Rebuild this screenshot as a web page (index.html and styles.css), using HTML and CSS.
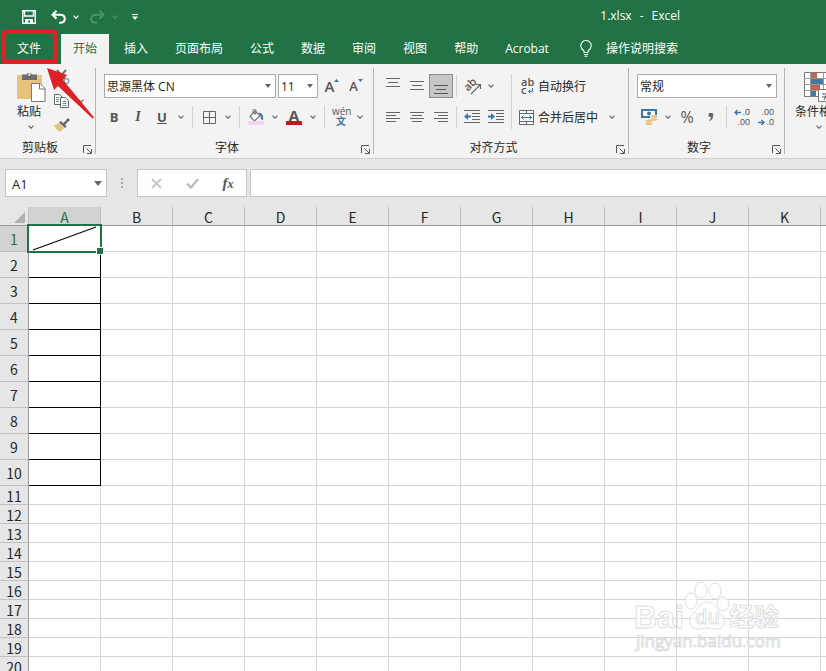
FILE: index.html
```
<!DOCTYPE html>
<html lang="zh-CN">

<head>
    <meta charset="UTF-8">
    <meta name="viewport" content="width=device-width, initial-scale=1.0">
    <title>1.xlsx - Excel</title>
    <link rel="stylesheet" href="styles.css">
</head>

<body>
    <!-- Shared shapes -->
    <svg class="defs" aria-hidden="true">
        <symbol id="chevron" viewBox="0 0 6 4"><path d="M.5 .7 3 3.2 5.5 .7" fill="none" stroke="currentColor" stroke-width="1.2"/></symbol>
        <symbol id="launcher" viewBox="0 0 9 9"><path d="M.5 8V.5H8M3.5 3.5 8 8M8.5 4v4.5H4" fill="none" stroke="#555"/></symbol>
    </svg>

    <header class="titlebar">
        <div class="quick">
            <button class="btn" aria-label="保存"><svg width="14" height="14" viewBox="0 0 14 14"><path d="M.7 .7h12.6v12.6H.7zM2.500 1v5h9V1" fill="none" stroke="#fff" stroke-width="1.400"/><path d="M3 9h8v4H8v-2.500H6V13H3z" fill="#fff"/></svg></button>
            <button class="btn undo" aria-label="撤消"><svg width="15" height="14" viewBox="0 0 15 14"><path d="M5.500 .8 1.500 4.800l4 4M2 4.800h7c3 0 4.800 1.600 4.800 4S12 12.800 9 12.800H8" fill="none" stroke="#fff" stroke-width="2"/></svg></button>
            <button class="chev" aria-label="撤消列表"><svg width="6" height="4"><use href="#chevron"/></svg></button>
            <button class="btn redo" aria-label="恢复"><svg width="15" height="14" viewBox="0 0 15 14"><path d="M9.500 .8l4 4-4 4M13 4.800H6C3 4.800 1.200 6.400 1.200 8.800S3 12.800 6 12.800H7" fill="none" stroke="#4f9169" stroke-width="2"/></svg></button>
            <button class="chev redo" aria-label="恢复列表"><svg width="6" height="4"><use href="#chevron"/></svg></button>
            <button class="btn customize" aria-label="自定义快速访问工具栏"><svg width="6" height="6" viewBox="0 0 6 6"><path d="M0 .5h6" stroke="#fff"/><path d="M0 2.500h6L3 6z" fill="#fff"/></svg></button>
        </div>
        <div class="doc-title"><span>1.xlsx</span><span>-</span><span>Excel</span></div>
    </header>

    <nav class="tabs">
        <button class="tab file">文件</button>
        <button class="tab active">开始</button>
        <button class="tab">插入</button>
        <button class="tab">页面布局</button>
        <button class="tab">公式</button>
        <button class="tab">数据</button>
        <button class="tab">审阅</button>
        <button class="tab">视图</button>
        <button class="tab">帮助</button>
        <button class="tab">Acrobat</button>
        <button class="tab search">
            <svg width="12" height="17" viewBox="0 0 12 17"><path d="M4 12.500V11C2 9.500 .7 8 .7 5.800a5.300 5.300 0 0 1 10.600 0C11.300 8 10 9.500 8 11v1.500zM4 14.500h4M4.500 16.300h3" fill="none" stroke="#fff" stroke-width="1.100"/></svg>
            操作说明搜索
        </button>
    </nav>

    <div class="ribbon">
        <!-- Clipboard -->
        <section class="group clipboard">
            <div class="tools">
                <button class="big">
                    <svg width="30" height="32" viewBox="0 0 30 32"><path d="M0 4h25v24H0z" fill="#e8c27c"/><path d="M5 3.500h4.500a3 3 0 0 1 5.500 0h5V9H5z" fill="#6d6d6d"/><circle cx="12.300" cy="3.500" r="1.200" fill="#f2f2f2"/><path d="M14.500 12.500h8.500l5 5v13H14.500z" fill="#fff" stroke="#777"/><path d="M22.500 12.500V18H28" fill="none" stroke="#777"/></svg>
                    粘贴
                    <svg width="6" height="4"><use href="#chevron"/></svg>
                </button>
                <div class="small-tools">
                    <button class="btn" aria-label="剪切"><svg width="16" height="16" viewBox="0 0 16 16"><path d="M12 1 4 10M3 1l8 9" stroke="#777" stroke-width="2"/><circle cx="12.500" cy="12" r="2.300" fill="none" stroke="#7f9cbc" stroke-width="1.300"/><circle cx="3.500" cy="12" r="2.300" fill="none" stroke="#7f9cbc" stroke-width="1.300"/></svg></button>
                    <div class="row">
                        <button class="btn" aria-label="复制"><svg width="16" height="14" viewBox="0 0 16 14"><path d="M.5 .5h5L8 3v7.500H.5z" fill="#fff" stroke="#666"/><path d="M6.500 3.500h5l3 3v7h-8z" fill="#fff" stroke="#666"/><path d="M2 3.500h3M2 5.500h3M2 7.500h3" stroke="#5b88b5"/><path d="M8.500 7.500h4M8.500 9.500h4M8.500 11.500h4" stroke="#5b88b5"/></svg></button>
                        <button class="chev" aria-label="复制选项"><svg width="6" height="4"><use href="#chevron"/></svg></button>
                    </div>
                    <button class="btn" aria-label="格式刷"><svg width="16" height="14" viewBox="0 0 16 14"><path d="M0 7.500 5 5l5 5-3.500 4C4 13 1.500 11 0 7.500z" fill="#e8c27c"/><path d="M5 4.500 7 3l5.500 5.500L11 10z" fill="#666"/><path d="m9 5 2-1.500L14 0l2 2-3.500 3-1.500 2.500z" fill="#666"/></svg></button>
                </div>
            </div>
            <div class="foot"><span>剪贴板</span><button aria-label="剪贴板设置"><svg width="9" height="9"><use href="#launcher"/></svg></button></div>
        </section>

        <!-- Font -->
        <section class="group font">
            <div class="tools">
                <div class="row boxes">
                    <div class="combo font-name"><select aria-label="字体"><option>思源黑体 CN</option></select></div>
                    <div class="combo font-size"><select aria-label="字号"><option>11</option></select></div>
                    <button class="btn glyph grow" aria-label="增大字号">A<svg width="5" height="3"><path d="M0 3h5L2.500 0z" fill="#3f74a6"/></svg></button>
                    <button class="btn glyph shrink" aria-label="减小字号">A<svg width="5" height="3"><path d="M0 0h5L2.500 3z" fill="#3f74a6"/></svg></button>
                </div>
                <div class="row">
                    <button class="btn glyph"><b>B</b></button>
                    <button class="btn glyph"><i>I</i></button>
                    <button class="btn glyph"><u>U</u></button>
                    <button class="chev" aria-label="下划线选项"><svg width="6" height="4"><use href="#chevron"/></svg></button>
                    <span class="sep"></span>
                    <button class="btn" aria-label="边框"><svg width="13" height="13" viewBox="0 0 13 13"><path d="M.5 .5h12v12H.5zM6.500 .5v12M.5 6.500h12" fill="none" stroke="#666"/></svg></button>
                    <button class="chev" aria-label="边框选项"><svg width="6" height="4"><use href="#chevron"/></svg></button>
                    <span class="sep"></span>
                    <button class="btn" aria-label="填充颜色"><svg width="16" height="16" viewBox="0 0 16 16"><path d="M7 2 2 7.500 6.500 12 12 6.500 7 2v4" fill="#fff" stroke="#777" stroke-width="1.200"/><path d="M5 4V1.500a1.500 1.500 0 0 1 3 0V5" fill="none" stroke="#777"/><path d="M10.500 3.500c4 .5 5 3 4.500 8-1.500-1-2.500-2.500-2.500-4.500z" fill="#3f74a6"/><path d="M0 12h16v4H0z" fill="#fbd0f7"/></svg></button>
                    <button class="chev" aria-label="填充选项"><svg width="6" height="4"><use href="#chevron"/></svg></button>
                    <button class="btn glyph color" aria-label="字体颜色"><b>A</b></button>
                    <button class="chev" aria-label="字体颜色选项"><svg width="6" height="4"><use href="#chevron"/></svg></button>
                    <span class="sep"></span>
                    <button class="btn pinyin" aria-label="拼音指南">
                        <svg width="18" height="18" viewBox="0 0 18 18"><text x="0" y="7">wén</text><text class="wen" x="4" y="17">文</text></svg>
                    </button>
                    <button class="chev" aria-label="拼音选项"><svg width="6" height="4"><use href="#chevron"/></svg></button>
                </div>
            </div>
            <div class="foot"><span>字体</span><button aria-label="字体设置"><svg width="9" height="9"><use href="#launcher"/></svg></button></div>
        </section>

        <!-- Alignment -->
        <section class="group align">
            <div class="tools">
                <div class="stack">
                    <div class="row">
                        <button class="btn" aria-label="顶端对齐"><svg width="14" height="16" viewBox="0 0 14 16"><path d="M0 .5h14M2 4.500h10M0 8.500h14" stroke="#666"/></svg></button>
                        <button class="btn" aria-label="垂直居中"><svg width="14" height="16" viewBox="0 0 14 16"><path d="M0 3.500h14M2 7.500h10M0 11.500h14" stroke="#666"/></svg></button>
                        <button class="btn pressed" aria-label="底端对齐"><svg width="14" height="16" viewBox="0 0 14 16"><path d="M0 7.500h14M2 11.500h10M0 15.500h14" stroke="#555"/></svg></button>
                        <span class="sep"></span>
                        <button class="btn" aria-label="方向"><svg width="20" height="20" viewBox="0 0 20 20"><text class="ab" x="4" y="15" transform="rotate(-45 6 13)">ab</text><path d="M9 18 18 9M14 8.500h4.500V13" fill="none" stroke="#666" stroke-width="1.200"/></svg></button>
                        <button class="chev" aria-label="方向选项"><svg width="6" height="4"><use href="#chevron"/></svg></button>
                    </div>
                    <div class="row">
                        <button class="btn" aria-label="左对齐"><svg width="14" height="12" viewBox="0 0 14 12"><path d="M0 1.500h14M0 4.500h10M0 7.500h14M0 10.500h10" stroke="#666"/></svg></button>
                        <button class="btn" aria-label="居中"><svg width="14" height="12" viewBox="0 0 14 12"><path d="M0 1.500h14M2 4.500h10M0 7.500h14M2 10.500h10" stroke="#666"/></svg></button>
                        <button class="btn" aria-label="右对齐"><svg width="14" height="12" viewBox="0 0 14 12"><path d="M0 1.500h14M4 4.500h10M0 7.500h14M4 10.500h10" stroke="#666"/></svg></button>
                        <span class="sep"></span>
                        <button class="btn" aria-label="减少缩进"><svg width="16" height="14" viewBox="0 0 16 14"><path d="M0 .5h16M8 3.500h8M8 6.500h8M8 9.500h8M0 12.500h16" stroke="#666"/><path d="M0 6.500 4 3v2.500h3v2H4V10z" fill="#3f74a6"/></svg></button>
                        <button class="btn" aria-label="增加缩进"><svg width="16" height="14" viewBox="0 0 16 14"><path d="M0 .5h16M8 3.500h8M8 6.500h8M8 9.500h8M0 12.500h16" stroke="#666"/><path d="M7 6.500 3 3v2.500H0v2h3V10z" fill="#3f74a6"/></svg></button>
                    </div>
                </div>
                <span class="sep tall"></span>
                <div class="stack">
                    <button class="wide"><svg width="16" height="20" viewBox="0 0 16 20"><text class="ab" x="2" y="9">ab</text><text class="ab" x="2" y="17">c</text><path d="M13.500 11v3.500H9.500M11.500 12.500l-2 2 2 2" fill="none" stroke="#3f74a6"/></svg>自动换行</button>
                    <div class="row">
                        <button class="wide"><svg width="16" height="15" viewBox="0 0 16 15"><path d="M.5 .5h14v14H.5zM.5 3.500h14M.5 11.500h14M7.500 .5v3M7.500 11.500v3" fill="#fff" stroke="#666"/><path d="M2.500 7.500h10M4.500 5.500l-2 2 2 2M10.500 5.500l2 2-2 2" fill="none" stroke="#3f74a6"/></svg>合并后居中</button>
                        <button class="chev" aria-label="合并选项"><svg width="6" height="4"><use href="#chevron"/></svg></button>
                    </div>
                </div>
            </div>
            <div class="foot"><span>对齐方式</span><button aria-label="对齐设置"><svg width="9" height="9"><use href="#launcher"/></svg></button></div>
        </section>

        <!-- Number -->
        <section class="group number">
            <div class="tools">
                <div class="combo"><select aria-label="数字格式"><option>常规</option></select></div>
                <div class="row">
                    <button class="btn" aria-label="会计数字格式"><svg width="17" height="16" viewBox="0 0 17 16"><path d="M1 1h14v7H1z" fill="#fff" stroke="#3f74a6" stroke-width="2"/><circle cx="8" cy="4.500" r="2" fill="#3f74a6"/><path d="M9 6h8v5H9zM4 11h8v5H4z" fill="#f2f2f2"/><ellipse cx="13" cy="7.500" rx="3.500" ry="1.300" fill="#e8c27c"/><ellipse cx="13" cy="10.500" rx="3.500" ry="1.300" fill="#e8c27c"/><ellipse cx="8" cy="12" rx="3.500" ry="1.300" fill="#e8c27c"/><ellipse cx="8" cy="14.700" rx="3.500" ry="1.300" fill="#e8c27c"/></svg></button>
                    <button class="chev" aria-label="货币选项"><svg width="6" height="4"><use href="#chevron"/></svg></button>
                    <button class="btn glyph percent">%</button>
                    <button class="btn" aria-label="千位分隔样式"><svg width="6" height="8" viewBox="0 0 6 8"><path d="M.5 2a2.300 2.300 0 0 1 4.700 0c.2 3-1.200 5-3.200 6L1.300 7C2.600 6.300 3.200 5.300 3 4.200 1.500 4.400 .5 3.500 .5 2z" fill="#666"/></svg></button>
                    <span class="sep"></span>
                    <button class="btn decimals"><span><svg width="7" height="7" viewBox="0 0 7 7"><path d="M7 3.500H1M3.500 1 1 3.500 3.500 6" fill="none" stroke="#3f74a6" stroke-width="1.300"/></svg>.0</span><span>.00</span></button>
                    <button class="btn decimals"><span>.00</span><span><svg width="7" height="7" viewBox="0 0 7 7"><path d="M0 3.500h6M3.500 1 6 3.500 3.500 6" fill="none" stroke="#3f74a6" stroke-width="1.300"/></svg>.0</span></button>
                </div>
            </div>
            <div class="foot"><span>数字</span><button aria-label="数字设置"><svg width="9" height="9"><use href="#launcher"/></svg></button></div>
        </section>

        <!-- Styles -->
        <section class="group styles">
            <div class="tools">
                <button class="big">
                    <svg width="32" height="32" viewBox="0 0 32 32"><path d="M1.500 1.500h28v24h-28z" fill="#fff" stroke="#777"/><path d="M8 2h6v5H8zM8 14h9v5H8z" fill="#c8644b"/><path d="M8 8h12v5H8zM8 20h5v5H8z" fill="#4179ac"/><path d="M1 7.500h28M1 13.500h28M1 19.500h28M7.500 1v25M20.500 1v25" stroke="#999"/><path d="M15.500 18.500h15v12h-15z" fill="#fff" stroke="#777"/><path d="M19 23h8M19 26h8M25 20l-4 9" stroke="#555"/></svg>
                    条件格式
                    <svg width="6" height="4"><use href="#chevron"/></svg>
                </button>
            </div>
        </section>

        <svg class="arrow" width="48" height="52" viewBox="0 0 48 52" aria-hidden="true"><path d="M0 0 20 7 16 12 47 49.500 45.500 50.500 11 18 7 22z" fill="#dc2127"/></svg>
    </div>

    <div class="formula-bar">
        <div class="combo name-box"><input type="text" value="A1" aria-label="名称框"></div>
        <svg class="dots" width="2" height="10" viewBox="0 0 2 10"><path d="M0 0h2v2H0zM0 4h2v2H0zM0 8h2v2H0z" fill="#aaa"/></svg>
        <div class="formula-buttons">
            <button aria-label="取消"><svg width="11" height="11" viewBox="0 0 11 11"><path d="m1 1 9 9M10 1l-9 9" stroke="#bbb" stroke-width="1.700"/></svg></button>
            <button aria-label="输入"><svg width="13" height="11" viewBox="0 0 13 11"><path d="m1 5.500 4 4L12 1" fill="none" stroke="#bbb" stroke-width="2.200"/></svg></button>
            <button class="fx" aria-label="插入函数">f<small>x</small></button>
        </div>
        <input class="formula" type="text" aria-label="编辑栏">
    </div>

    <main class="sheet">
        <table>
            <thead>
                <tr>
                    <th class="corner"><svg width="11" height="11"><path d="M11 0v11H0z" fill="#b2b2b2"/></svg></th>
                    <th class="on">A</th><th>B</th><th>C</th><th>D</th><th>E</th><th>F</th><th>G</th><th>H</th><th>I</th><th>J</th><th>K</th><th></th>
                </tr>
            </thead>
            <tbody id="rows"></tbody>
        </table>
        <div class="selection"><svg viewBox="0 0 71 24" preserveAspectRatio="none"><path d="M4 23 67 1" stroke="#000"/></svg></div>
        <svg class="watermark" width="150" height="76" viewBox="0 0 150 76" aria-hidden="true">
            <text class="logo" x="0" y="47">Bai</text>
            <ellipse cx="57" cy="20" rx="6" ry="8"/>
            <ellipse cx="67" cy="9" rx="6" ry="8"/>
            <ellipse cx="81" cy="10" rx="6" ry="8"/>
            <ellipse cx="89" cy="23" rx="6" ry="7"/>
            <path d="M73 21c8 0 9 8 14 12s5 15-4 15c-5 0-6-1-10-1s-5 1-10 1c-9 0-9-11-4-15s6-12 14-12z"/>
            <text class="du" x="61" y="43">du</text>
            <text class="cjk" x="95" y="45">经验</text>
            <text class="url" x="2" y="66">jingyan.baidu.com</text>
        </svg>
    </main>

    <script>
        const body = document.getElementById("rows");
        for (let r = 1; r <= 20; r++) {
            const tr = body.insertRow();
            // the first ten rows are taller and have a bordered A cell
            if (r <= 10) tr.className = "tall";
            const th = document.createElement("th");
            th.textContent = r;
            if (r === 1) th.className = "on";
            tr.appendChild(th);
            for (let c = 0; c < 12; c++) {
                const td = tr.insertCell();
                if (c === 0 && r <= 10) td.className = "boxed";
            }
        }
    </script>
</body>

</html>
```
FILE: styles.css
```
* {
    box-sizing: border-box;
}

body {
    margin: 0;
    height: 100vh;
    overflow: hidden;
    display: flex;
    flex-direction: column;
    font-family: "Open Sans", "Noto Sans CJK SC", sans-serif;
    font-size: 12px;
    line-height: 16px;
    color: #262626;
    background: #e6e6e6;
}

button,
input,
select {
    font: inherit;
    color: inherit;
    margin: 0;
    padding: 0;
    border: none;
    background: none;
    border-radius: 0;
}

svg {
    display: block;
    flex: none;
}

.defs {
    position: absolute;
    width: 0;
    height: 0;
}

/* Title bar and tabs */
.titlebar {
    flex: none;
    height: 34px;
    background: #217346;
    color: #fff;
    display: flex;
    justify-content: space-between;
    padding: 0 146px 0 17px;
}

.quick {
    display: flex;
    align-items: center;
}

.quick .undo {
    margin-left: 5px;
}

.quick .chev {
    width: 12px;
    color: #fff;
}

.quick .redo {
    margin-left: 3px;
}

.quick .chev.redo {
    margin: 0;
    color: #4f9169;
}

.quick .customize {
    margin-left: 2px;
}

.doc-title {
    display: flex;
    gap: 8px;
    align-items: center;
    padding-bottom: 3px;
}

.tabs {
    flex: none;
    height: 30px;
    background: #217346;
    display: flex;
    gap: 3px;
    padding-left: 5px;
}

.tab {
    padding: 0 12px 1px;
    color: #fff;
    white-space: nowrap;
}

.tab.file {
    position: relative;
    margin-right: 5px;
}

.tab.file::after {
    content: "";
    position: absolute;
    top: -4px;
    right: -4px;
    bottom: 0;
    left: -3px;
    border: 4px solid #dc2127;
    border-radius: 2px;
}

.tab.active {
    background: #f3f3f3;
    color: #217346;
}

.tab.search {
    display: flex;
    align-items: center;
    gap: 14px;
    margin-left: 4px;
}

/* Ribbon */
.ribbon {
    flex: none;
    position: relative;
    display: flex;
    overflow: hidden;
    background: #f3f3f3;
    border-bottom: 1px solid #cfcfcf;
}

.group {
    flex: none;
    position: relative;
    display: flex;
    flex-direction: column;
    gap: 7px;
    padding-top: 10px;
}

.group::after {
    content: "";
    position: absolute;
    top: 4px;
    right: 0;
    bottom: 4px;
    border-right: 1px solid #b4b4b4;
}

.group .tools {
    height: 55px;
    display: flex;
    flex-direction: column;
    gap: 7px;
}

.foot {
    height: 22px;
    display: flex;
    align-items: center;
}

.foot span {
    flex: 1;
    padding-top: 2px;
    text-align: center;
}

.foot button {
    width: 16px;
    padding: 4px 0 0 3px;
}

.row {
    display: flex;
    align-items: center;
    height: 24px;
}

.stack {
    display: flex;
    flex-direction: column;
    gap: 7px;
}

.btn,
.chev {
    flex: none;
    display: flex;
    align-items: center;
    justify-content: center;
    width: 24px;
    height: 24px;
    color: #555;
}

.chev {
    width: 14px;
    color: #6a6a6a;
}

.sep {
    flex: none;
    width: 1px;
    height: 22px;
    margin: 0 3px;
    background: #d0d0d0;
}

.sep.tall {
    height: 55px;
}

.combo {
    position: relative;
    height: 24px;
    background: #fff;
    border: 1px solid #ababab;
}

.combo::after {
    content: "";
    position: absolute;
    top: 9px;
    right: 4px;
    border: 3px solid transparent;
    border-top: 4px solid #666;
    border-bottom: none;
    pointer-events: none;
}

.combo select,
.combo input {
    appearance: none;
    width: 100%;
    height: 100%;
    padding-left: 2px;
    padding-top: 1px;
}

.big {
    display: flex;
    flex-direction: column;
    align-items: center;
    gap: 1px;
    white-space: nowrap;
}

.big svg:last-child {
    margin-top: 4px;
    color: #6a6a6a;
}

.wide {
    height: 24px;
    display: flex;
    align-items: center;
    gap: 3px;
    white-space: nowrap;
    padding-top: 1px;
}

.clipboard {
    width: 96px;
}

.group.clipboard .tools {
    flex-direction: row;
    align-items: flex-start;
    padding-left: 17px;
    gap: 3px;
}

.clipboard .big {
    align-items: flex-start;
    margin-top: -3px;
}

.clipboard .big svg:last-child {
    margin-left: 11px;
}

.small-tools {
    margin-top: -9px;
}

.font {
    width: 278px;
}

.font .tools {
    padding-left: 6px;
}

.font .boxes {
    padding-left: 2px;
}

.font .sep {
    margin: 0 4px;
}

.font-name {
    width: 172px;
    margin-right: 2px;
}

.font-size {
    width: 40px;
    margin-right: 2px;
}

.glyph {
    font-size: 14px;
}

.glyph b,
.glyph u {
    font-size: 13px;
    font-weight: 700;
}

.glyph i {
    font-family: "Liberation Serif", serif;
    font-weight: 700;
}

.grow,
.shrink {
    font-size: 15px;
    font-weight: 600;
}

.shrink {
    font-size: 13px;
}

.grow svg,
.shrink svg {
    margin-bottom: 12px;
}

.glyph.color b {
    width: 16px;
    height: 16px;
    font-size: 15px;
    line-height: 12px;
    border-bottom: 4px solid #c8141b;
}

.pinyin svg {
    overflow: visible;
    font-size: 10px;
    fill: #555;
}

.pinyin .wen {
    fill: #3f74a6;
    font-weight: 700;
}

.group.align {
    width: 255px;
}

.align .tools {
    flex-direction: row;
    gap: 0;
    padding-left: 7px;
}

.align .stack:last-child {
    padding-left: 4px;
}

.align .wide + .chev {
    margin-left: 7px;
}

.pressed {
    background: #c6c6c6;
    border: 1px solid #8a8a8a;
}

.align svg {
    overflow: visible;
}

.ab {
    font-size: 11px;
    font-weight: 600;
    fill: #555;
}

.number {
    width: 156px;
}

.number .tools {
    padding: 0 8px;
}

.percent {
    font-size: 16px;
}

.decimals {
    flex-direction: column;
    align-items: flex-end;
    padding-right: 4px;
    font-family: "Liberation Sans", sans-serif;
    font-size: 9px;
    line-height: 10px;
}

.decimals span {
    display: flex;
    align-items: center;
    gap: 1px;
}

.styles {
    padding-left: 10px;
}

.styles .big {
    margin-top: -3px;
}

.arrow {
    position: absolute;
    top: 4px;
    left: 47px;
}

/* Formula bar */
.formula-bar {
    flex: none;
    display: flex;
    align-items: center;
    padding: 10px 0 10px 5px;
}

.formula-bar .combo,
.formula-buttons,
.formula {
    height: 28px;
    background: #fff;
    border: 1px solid #c6c6c6;
}

.name-box {
    width: 102px;
}

.formula-bar .name-box::after {
    top: 11px;
    border-width: 5px 4px 0;
}

.name-box input {
    padding-left: 6px;
    font-size: 13px;
}

.dots {
    margin: 0 14px;
}

.formula-buttons {
    width: 110px;
    margin-right: 3px;
    display: flex;
}

.formula-buttons button {
    width: 36px;
    display: flex;
    align-items: center;
    justify-content: center;
}

.formula-buttons .fx {
    font: italic 700 15px "Liberation Serif", serif;
    color: #555;
}

.fx small {
    font-size: 12px;
    padding-top: 3px;
}

.formula {
    flex: 1;
    border-right: none;
}

/* Sheet */
.sheet {
    position: relative;
    flex: 1;
    overflow: hidden;
    background: #fff;
    font-family: "Noto Sans CJK SC", sans-serif;
    font-size: 14px;
}

.sheet table {
    width: 893px;
    table-layout: fixed;
    border-collapse: separate;
    border-spacing: 0;
}

.sheet th {
    padding: 2px 0 0;
    height: 19px;
    line-height: 16px;
    font-weight: 400;
    background: #e6e6e6;
    border-right: 1px solid #c0c0c0;
    border-bottom: 1px solid #9b9b9b;
}

.sheet thead th:first-child {
    width: 29px;
}

.sheet tbody th {
    border-right-color: #9b9b9b;
    border-bottom-color: #c0c0c0;
}

.sheet th.on {
    background: #d2d2d2;
    color: #217346;
}

.corner svg {
    margin-left: 14px;
}

.sheet td {
    padding: 0;
    border-right: 1px solid #d4d4d4;
    border-bottom: 1px solid #d4d4d4;
}

.sheet .tall th {
    height: 26px;
    line-height: 23px;
}

.sheet td.boxed {
    border-color: #000;
}

.selection {
    position: absolute;
    top: 17px;
    left: 27px;
    width: 75px;
    height: 29px;
    border: 2px solid #217346;
}

.selection svg {
    width: 100%;
    height: 100%;
}

.selection::after {
    content: "";
    position: absolute;
    right: -3px;
    bottom: -3px;
    width: 6px;
    height: 6px;
    background: #217346;
    outline: 1px solid #fff;
}

.watermark {
    position: absolute;
    right: 42px;
    bottom: 14px;
    fill: #fff;
    fill-opacity: 0.7;
    stroke: #dedede;
    font-family: "Open Sans", "Noto Sans CJK SC", sans-serif;
}

.watermark .logo {
    font: 700 32px "Liberation Sans", sans-serif;
}

.watermark .du {
    font-size: 20px;
    font-weight: 600;
}

.watermark .cjk {
    font-size: 25px;
    font-weight: 700;
}

.watermark .url {
    font-size: 17px;
}
```
